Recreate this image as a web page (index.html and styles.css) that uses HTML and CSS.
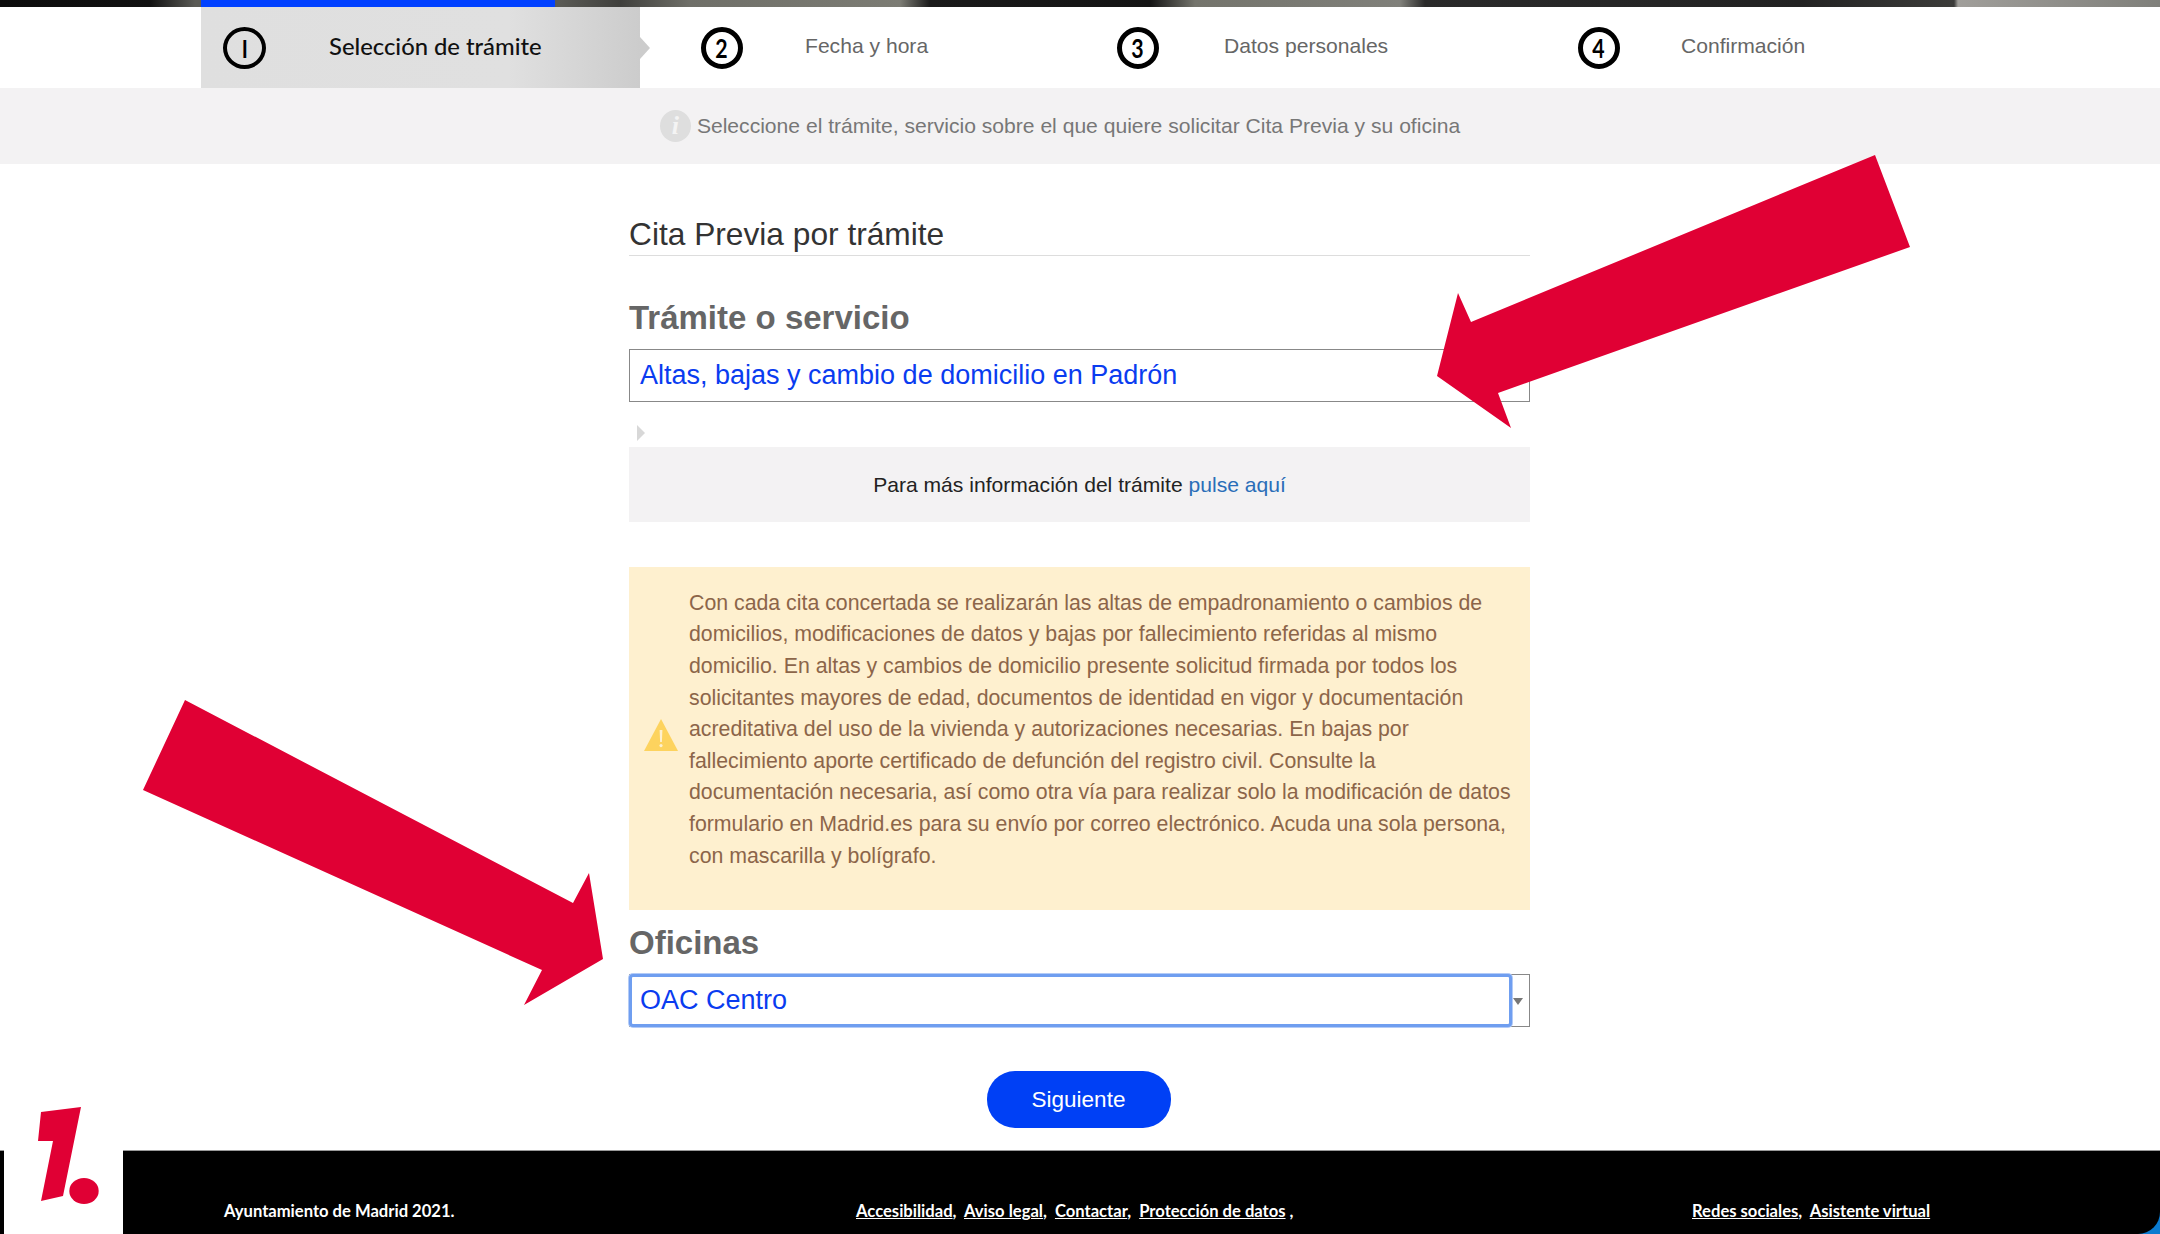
FILE: index.html
```html
<!DOCTYPE html>
<html lang="es">
<head>
<meta charset="utf-8">
<title>Cita Previa</title>
<link rel="stylesheet" href="styles.css">
</head>
<body>
<div class="page">
  <div class="strip"><div class="strip-progress"></div></div>
  <nav class="steps">
    <div class="step step-active">
      <span class="num num-thin"><span class="digit">I</span></span>
      <span class="step-label label-active">Selección de trámite</span>
      <span class="step-tip"></span>
    </div>
    <div class="step step-2"><span class="num"><span class="digit">2</span></span><span class="step-label">Fecha y hora</span></div>
    <div class="step step-3"><span class="num"><span class="digit">3</span></span><span class="step-label">Datos personales</span></div>
    <div class="step step-4"><span class="num"><span class="digit">4</span></span><span class="step-label">Confirmación</span></div>
  </nav>
  <div class="hint">
    <span class="hint-icon">i</span>
    <span>Seleccione el trámite, servicio sobre el que quiere solicitar Cita Previa y su oficina</span>
  </div>
  <main class="form">
    <h1 class="title">Cita Previa por trámite</h1>
    <h2 class="field-label first">Trámite o servicio</h2>
    <div class="select">Altas, bajas y cambio de domicilio en Padrón</div>
    <div class="disclosure"><span class="disclosure-arrow"></span></div>
    <div class="more">Para más información del trámite <a class="more-link" href="#">pulse aquí</a></div>
    <div class="warning">
      <svg class="warning-icon" viewBox="0 0 34 32" aria-hidden="true">
        <path d="M17 0 L34 32 L0 32 Z" fill="#fdd35e"/>
        <path d="M15.6 11 h2.8 l-.5 12 h-1.8 Z" fill="#fef0cf"/>
        <circle cx="17" cy="26.6" r="1.6" fill="#fef0cf"/>
      </svg>
      <p class="warning-text">Con cada cita concertada se realizarán las altas de empadronamiento o cambios de domicilios, modificaciones de datos y bajas por fallecimiento referidas al mismo domicilio. En altas y cambios de domicilio presente solicitud firmada por todos los solicitantes mayores de edad, documentos de identidad en vigor y documentación acreditativa del uso de la vivienda y autorizaciones necesarias. En bajas por fallecimiento aporte certificado de defunción del registro civil. Consulte la documentación necesaria, así como otra vía para realizar solo la modificación de datos formulario en Madrid.es para su envío por correo electrónico. Acuda una sola persona, con mascarilla y bolígrafo.</p>
    </div>
    <h2 class="field-label second">Oficinas</h2>
    <div class="combo">
      <div class="combo-value">OAC Centro</div>
      <span class="combo-caret"></span>
    </div>
    <div class="actions"><button class="next" type="button">Siguiente</button></div>
  </main>
  <footer class="footer">
    <div class="footer-copy">Ayuntamiento de Madrid 2021.</div>
    <div class="footer-links"><a href="#">Accesibilidad</a>, &nbsp;<a href="#">Aviso legal</a>, &nbsp;<a href="#">Contactar</a>, &nbsp;<a href="#">Protección de datos</a> ,</div>
    <div class="footer-links"><a href="#">Redes sociales</a>, &nbsp;<a href="#">Asistente virtual</a></div>
  </footer>

  <div class="logo">
    <svg class="logo-svg" viewBox="0 0 123 127" aria-hidden="true">
      <path d="M41 5 L81 0 L63 89 L41 94 L53 34 L38 34 Z" fill="#e00034"/>
      <ellipse cx="84" cy="84" rx="14.7" ry="13" fill="#e00034"/>
    </svg>
  </div>
  <svg class="arrows" viewBox="0 0 2160 1234" aria-hidden="true">
    <polygon points="1875,155 1910,247 1498,393 1511,428 1437,376 1458,293 1471,322" fill="#e00034"/>
    <polygon points="185,700 143,790 542,970 524,1005 603,959 589,873 573,903" fill="#e00034"/>
  </svg>
</div>
</body>
</html>
```

FILE: styles.css
```css
* { box-sizing: border-box; }
html, body { margin: 0; padding: 0; background: #fff; }
body { font-family: "Liberation Sans", Arial, sans-serif; }
.page { position: relative; width: 2160px; height: 1234px; overflow: hidden; display: flex; flex-direction: column; background: #0a7bd0; }
.steps, .form { background-color: #fff; }

.strip {
  height: 7px;
  flex: none;
  padding-left: 201px;
  background: linear-gradient(90deg, #0c0c0c 0, #111 150px, #5a5a55 195px, #5a5a55 560px, #3f3f3c 620px, #6f6f68 690px, #7c7c74 900px, #1a1a1a 930px, #141414 1150px, #74746c 1195px, #80807a 1400px, #2a2a2a 1425px, #222 1800px, #3c3c3a 1954px, #a09e9a 1958px, #7f7f7a 2160px);
}
.strip-progress { width: 354px; height: 7px; background: #0040ff; }

.steps { height: 81px; display: flex; padding-left: 201px; flex: none; }
.step { display: flex; align-items: center; color: #666; font-size: 21.1px; }
.step-active { width: 439px; padding-left: 22px; position: relative; background: linear-gradient(90deg, #dfdfdf 0, #e0e0e0 70%, #cccccc 100%); }
.step-2 { width: 416px; padding-left: 61px; }
.step-3 { width: 461px; padding-left: 61px; }
.step-4 { padding-left: 61px; }
.step-tip { position: absolute; left: 100%; top: 30px; border-left: 10px solid #ccc; border-top: 11px solid transparent; border-bottom: 11px solid transparent; }
.num { flex: none; width: 42px; height: 42px; border: 5px solid #000; border-radius: 50%; display: flex; align-items: center; justify-content: center; font-family: "Lato", sans-serif; font-weight: 700; font-size: 26px; color: #000; }
.digit { display: block; transform: scaleX(0.82); }
.num-thin { border-width: 4px; font-weight: 700; font-size: 25px; width: 43px; }
.step-label { margin-left: 62px; padding-bottom: 3px; }
.step-3 .step-label { margin-left: 65px; }
.step-4 .step-label { margin-left: 61px; }
.step-active .label-active { font-family: "Lato", sans-serif; font-weight: 500; font-size: 23.8px; color: #111; margin-left: 63px; }

.hint { height: 76px; flex: none; background-color: #f3f2f3; display: flex; align-items: center; justify-content: center; gap: 6px; color: #777; font-size: 21.1px; padding-right: 40px; }
.hint-icon { width: 31px; height: 32px; border-radius: 50%; background: #dedede; color: #f4f4f4; display: flex; align-items: center; justify-content: center; font-family: "Liberation Serif", serif; font-style: italic; font-weight: 700; font-size: 26px; }

.form { flex: 1 1 auto; padding: 0 630px 0 629px; display: flex; flex-direction: column; }
.title { margin: 50px 0 0; height: 42px; line-height: 40px; font-weight: 400; font-size: 31.7px; color: #333; border-bottom: 1px solid #ddd; }
.field-label { margin: 0; font-weight: 700; font-size: 33px; color: #666; }
.first { margin-top: 39px; height: 54px; line-height: 45px; }
.select { height: 53px; border: 1px solid #888; padding-left: 10px; display: flex; align-items: center; font-size: 27px; color: #0a3cf0; padding-bottom: 1px; }
.disclosure { height: 45px; padding: 23px 0 0 8px; }
.disclosure-arrow { display: block; width: 0; border-left: 8px solid #d8d8d8; border-top: 8px solid transparent; border-bottom: 8px solid transparent; }
.more { height: 75px; background: #f3f2f3; display: flex; align-items: center; justify-content: center; gap: 0.28em; font-size: 21.1px; color: #222; }
.more-link { color: #2a6eb8; text-decoration: none; }
.warning { margin-top: 45px; height: 343px; background: #fef0cf; display: flex; align-items: center; padding: 0 18px 0 15px; color: #8c6549; }
.warning-icon { flex: none; width: 34px; height: 32px; margin-top: -7px; }
.warning-text { margin: 0 0 0 11px; font-size: 21.3px; line-height: 31.6px; padding-bottom: 17px; }
.second { margin-top: 14px; height: 50px; line-height: 38px; }
.combo { height: 53px; position: relative; border: 1px solid #888; }
.combo-value { position: absolute; left: -1px; top: -1px; width: 883px; height: 53px; border: 3px solid #6f9ef0; border-radius: 4px; box-shadow: 0 0 0 1px #b3cbf7; background: #fff; padding-left: 8px; display: flex; align-items: center; font-size: 27px; color: #0a3cf0; }
.combo-caret { position: absolute; right: 6px; top: 23px; border-top: 7px solid #777; border-left: 5px solid transparent; border-right: 5px solid transparent; }
.actions { display: flex; justify-content: center; margin-top: 44px; padding-right: 2px; }
.next { width: 184px; height: 57px; border: 0; border-radius: 28px; background: #0040f5; color: #fff; font-family: "Liberation Sans", Arial, sans-serif; font-size: 22.5px; }

.footer { height: 84px; flex: none; background: #000; border-top: 1px solid #999; border-bottom-right-radius: 22px; display: grid; grid-template-columns: 632px 836px 1fr; padding: 50px 0 0 224px; font-family: "Lato", sans-serif; font-weight: 700; font-size: 16.6px; color: #fff; }
.footer-links a { color: #fff; text-decoration: underline; }

.logo { position: absolute; left: 4px; top: 1107px; width: 119px; height: 127px; }
.logo::before { content: ""; position: absolute; left: 0; right: 0; top: 43px; bottom: 0; background: #fff; }
.logo-svg { position: absolute; left: -4px; top: 0; width: 123px; height: 127px; }
.arrows { position: absolute; left: 0; top: 0; width: 2160px; height: 1234px; pointer-events: none; }
```
